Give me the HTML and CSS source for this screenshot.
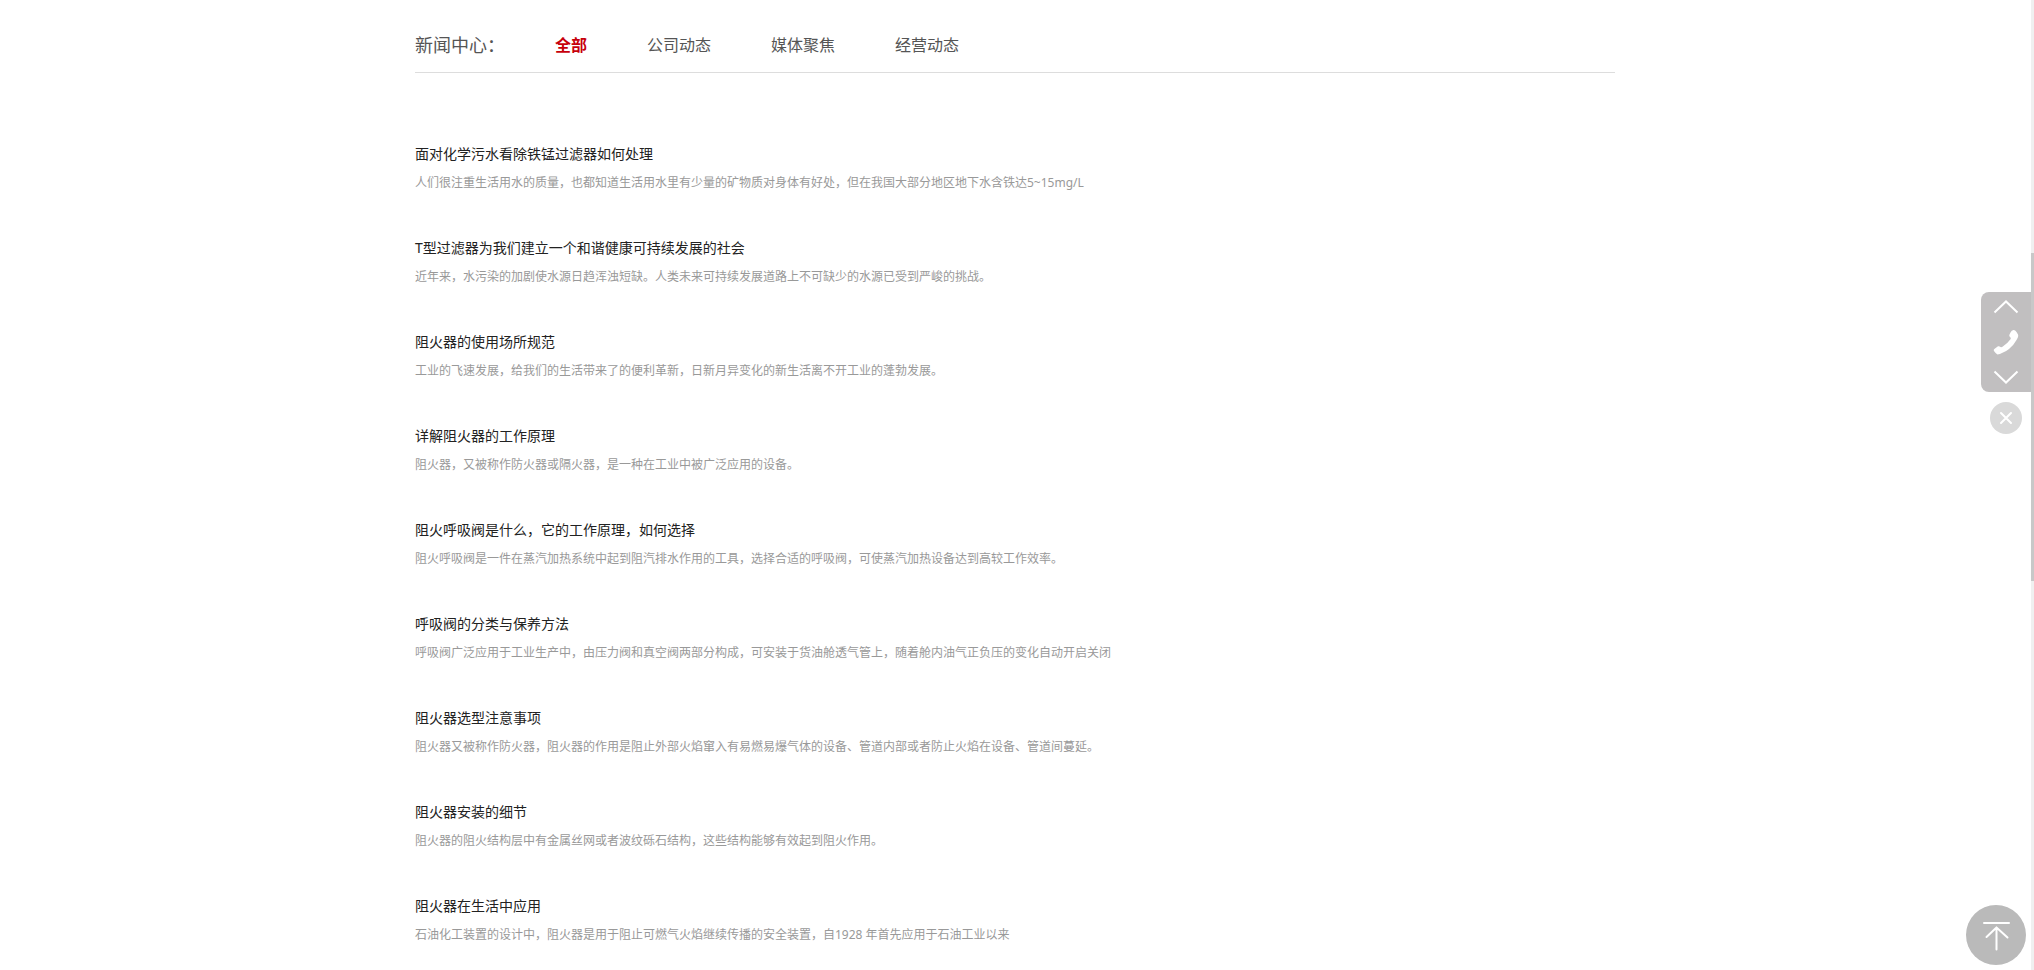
FILE: index.html
```html
<!DOCTYPE html>
<html lang="zh-CN">
<head>
    <meta charset="UTF-8">
    <meta name="viewport" content="width=device-width, initial-scale=1.0">
    <title>新闻中心</title>
    <link rel="stylesheet" href="styles.css">
</head>
<body>
    <div class="container">
        <!-- Category tabs -->
        <nav class="news-nav">
            <span class="news-label">新闻中心：</span>
            <a class="active" href="#">全部</a>
            <a href="#">公司动态</a>
            <a href="#">媒体聚焦</a>
            <a href="#">经营动态</a>
        </nav>

        <!-- News list -->
        <ul class="news-list">
            <li>
                <h3><a href="#">面对化学污水看除铁锰过滤器如何处理</a></h3>
                <p>人们很注重生活用水的质量，也都知道生活用水里有少量的矿物质对身体有好处，但在我国大部分地区地下水含铁达5~15mg/L</p>
            </li>
            <li>
                <h3><a href="#">T型过滤器为我们建立一个和谐健康可持续发展的社会</a></h3>
                <p>近年来，水污染的加剧使水源日趋浑浊短缺。人类未来可持续发展道路上不可缺少的水源已受到严峻的挑战。</p>
            </li>
            <li>
                <h3><a href="#">阻火器的使用场所规范</a></h3>
                <p>工业的飞速发展，给我们的生活带来了的便利革新，日新月异变化的新生活离不开工业的蓬勃发展。</p>
            </li>
            <li>
                <h3><a href="#">详解阻火器的工作原理</a></h3>
                <p>阻火器，又被称作防火器或隔火器，是一种在工业中被广泛应用的设备。</p>
            </li>
            <li>
                <h3><a href="#">阻火呼吸阀是什么，它的工作原理，如何选择</a></h3>
                <p>阻火呼吸阀是一件在蒸汽加热系统中起到阻汽排水作用的工具，选择合适的呼吸阀，可使蒸汽加热设备达到高较工作效率。</p>
            </li>
            <li>
                <h3><a href="#">呼吸阀的分类与保养方法</a></h3>
                <p>呼吸阀广泛应用于工业生产中，由压力阀和真空阀两部分构成，可安装于货油舱透气管上，随着舱内油气正负压的变化自动开启关闭</p>
            </li>
            <li>
                <h3><a href="#">阻火器选型注意事项</a></h3>
                <p>阻火器又被称作防火器，阻火器的作用是阻止外部火焰窜入有易燃易爆气体的设备、管道内部或者防止火焰在设备、管道间蔓延。</p>
            </li>
            <li>
                <h3><a href="#">阻火器安装的细节</a></h3>
                <p>阻火器的阻火结构层中有金属丝网或者波纹砾石结构，这些结构能够有效起到阻火作用。</p>
            </li>
            <li>
                <h3><a href="#">阻火器在生活中应用</a></h3>
                <p>石油化工装置的设计中，阻火器是用于阻止可燃气火焰继续传播的安全装置，自1928 年首先应用于石油工业以来</p>
            </li>
        </ul>
    </div>

    <!-- Floating contact bar -->
    <div class="side-tools">
        <div class="side-bar">
            <button type="button" aria-label="上一个">
                <svg width="26" height="14" viewBox="0 0 26 14"><path d="M1.5 12.5 13 1.5l11.5 11" fill="none" stroke="#fff" stroke-width="2"/></svg>
            </button>
            <button type="button" aria-label="电话">
                <svg width="26" height="26" viewBox="0 0 26 26"><path d="M17.500 3.500Q18.500 1 20.500 1Q22 .8 23.500 3L25 5.500Q25.800 7.500 23.500 11Q20.500 16.500 16 20Q13 22.500 10 23.500Q6.500 25.500 4.500 25.500Q3 25 .8 21.800Q.3 20.500 2 19.500L5 17.300Q6.200 16.800 7.500 18Q8.500 18.500 9.500 17.800Q14.500 14.500 17.500 10.300Q18.200 9.200 17.300 8.300Q16 7.200 16.300 6Z" fill="#fff"/></svg>
            </button>
            <button type="button" aria-label="下一个">
                <svg width="26" height="14" viewBox="0 0 26 14"><path d="M1.5 1.500 13 12.500l11.500-11" fill="none" stroke="#fff" stroke-width="2"/></svg>
            </button>
        </div>
        <button class="side-close" type="button" aria-label="关闭">
            <svg width="14" height="14" viewBox="0 0 14 14"><path d="M2 2l10 10M12 2 2 12" stroke="#fff" stroke-width="2" stroke-linecap="round"/></svg>
        </button>
    </div>

    <button class="back-top" type="button" aria-label="返回顶部">
        <svg width="60" height="60" viewBox="0 0 60 60"><path d="M18 18h25M30.500 44.500V22.500M20.500 32l10-9.500 11 10" fill="none" stroke="#fff" stroke-width="2" stroke-linecap="round" stroke-linejoin="round"/></svg>
    </button>

    <div class="scroll-track"><div class="scroll-thumb"></div></div>
</body>
</html>
```
FILE: styles.css
```css
* {
    margin: 0;
    padding: 0;
    box-sizing: border-box;
}

html {
    overflow: hidden;
}

body {
    font-family: "Noto Sans", "Noto Sans CJK SC", sans-serif;
    font-size: 14px;
    color: #333;
    background: #fff;
    padding-right: 4px;
}

a {
    color: inherit;
    text-decoration: none;
}

.container {
    max-width: 1200px;
    margin: 0 auto;
}

/* Category tabs */
.news-nav {
    display: flex;
    align-items: center;
    gap: 60px;
    height: 73px;
    padding-top: 16px;
    border-bottom: 1px solid #ddd;
    font-size: 16px;
    color: #555;
}

.news-label {
    width: 80px;
    font-size: 18px;
    white-space: nowrap;
}

.news-nav .active {
    color: #c7000b;
    font-weight: bold;
}

/* News list */
.news-list {
    list-style: none;
    padding-top: 67px;
}

.news-list li {
    padding-bottom: 36px;
}

.news-list h3 {
    font-size: 14px;
    font-weight: normal;
    line-height: 28px;
    color: #222;
}

.news-list p {
    font-size: 12px;
    line-height: 30px;
    color: #999;
}

button {
    display: flex;
    align-items: center;
    justify-content: center;
    border: none;
    background: none;
    cursor: pointer;
}

/* Floating contact bar */
.side-tools {
    position: fixed;
    top: 292px;
    right: 3px;
    width: 50px;
    display: flex;
    flex-direction: column;
    align-items: center;
    gap: 10px;
}

.side-bar {
    width: 50px;
    height: 100px;
    padding: 8px 0;
    display: flex;
    flex-direction: column;
    align-items: center;
    justify-content: space-between;
    border-radius: 8px 0 0 8px;
    background: #c1bfc0;
}

.side-close {
    width: 32px;
    height: 32px;
    border-radius: 50%;
    background: #d9d9d9;
}

.back-top {
    position: fixed;
    right: 8px;
    bottom: 5px;
    width: 60px;
    height: 60px;
    border-radius: 50%;
    background: #bababa;
}

/* Thin page scrollbar */
.scroll-track {
    position: fixed;
    top: 0;
    right: 0;
    bottom: 0;
    width: 3px;
    padding-top: 253px;
    background: #f0f0f0;
}

.scroll-thumb {
    height: 328px;
    background: #c8c8c8;
}
```
